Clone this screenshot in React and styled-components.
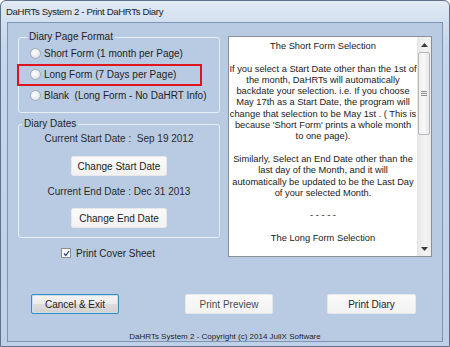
import React from 'react';
import styled, { createGlobalStyle } from 'styled-components';

const GlobalStyle = createGlobalStyle`
    html, body {
        margin: 0;
        padding: 0;
        background: #ffffff;
    }
    body {
        font-family: "Liberation Sans", Arial, sans-serif;
        color: #1e1e1e;
    }
`;

const Window = styled.div`
    width: 450px;
    height: 347px;
    box-sizing: border-box;
    display: flex;
    flex-direction: column;
    border: 1px solid #5f7088;
    border-radius: 6px 6px 0 0;
    background: linear-gradient(180deg, #e3ebf5 0%, #d4e1f0 18px, #c6d7eb 45px, #bdd0e7 100%);
    overflow: hidden;
`;

const TitleBar = styled.div`
    height: 21px;
    display: flex;
    align-items: center;
    padding-left: 5px;
    font-size: 9.6px;
    letter-spacing: -0.35px;
    color: #1b1b1b;
`;

const Client = styled.div`
    flex: 1;
    margin: 0 6px 4px 6px;
    border: 1px solid #7f94ae;
    background: #b8cbe3;
    padding: 8px 10px 0 10px;
    display: flex;
    flex-direction: column;
`;

const TopRow = styled.div`
    display: flex;
    gap: 8px;
    align-items: flex-start;
`;

const LeftCol = styled.div`
    width: 202px;
    display: flex;
    flex-direction: column;
`;

const Group = styled.fieldset`
    margin: ${p => p.$gap || 0}px 0 0 0;
    padding: 0 0 ${p => p.$bottom || 0}px 0;
    border: 1px solid #e8eef6;
    border-radius: 3px;
    min-inline-size: 0;
`;

const Legend = styled.legend`
    margin-left: ${p => p.$offset}px;
    padding: 0 2px;
    font-size: 10px;
    line-height: 12px;
    color: #222;
`;

const RadioRow = styled.label`
    position: relative;
    display: flex;
    align-items: center;
    height: 21px;
    padding-left: 11px;
    font-size: 10px;
    color: #1e1e1e;

    &::after {
        content: '';
        display: ${p => (p.$marked ? 'block' : 'none')};
        position: absolute;
        left: -2px;
        top: 0;
        width: 185px;
        height: 22px;
        box-sizing: border-box;
        border: 2px solid #e0141e;
    }
`;

const RadioDot = styled.span`
    width: 11px;
    height: 11px;
    box-sizing: border-box;
    border-radius: 50%;
    border: 1px solid #a3acb7;
    background: radial-gradient(circle at 40% 35%, #ffffff 0%, #eef1f4 45%, #cdd3da 100%);
    margin-right: 3px;
    flex-shrink: 0;
`;

const DateLine = styled.div`
    margin-top: ${p => p.$gap}px;
    height: 14px;
    line-height: 14px;
    text-align: center;
    font-size: 10px;
    color: #2a2a2a;
    white-space: pre;
`;

const Button = styled.button`
    display: block;
    width: ${p => p.$width || 88}px;
    height: 20px;
    padding: 0;
    margin: ${p => p.$margin || '0'};
    font-family: "Liberation Sans", Arial, sans-serif;
    font-size: 10px;
    color: ${p => (p.$dim ? '#4a4a4a' : '#222')};
    border-radius: 2px;
    border: 1px solid ${p => (p.$focused ? '#3f8ab6' : '#e6e8ea')};
    background: ${p =>
        p.$focused
            ? 'linear-gradient(180deg, #f4f4f4 0%, #ececec 48%, #dedcdc 52%, #d2d0d0 100%)'
            : 'linear-gradient(180deg, #fafafa 0%, #f2f2f2 100%)'};
    box-shadow: ${p => (p.$focused ? 'inset 0 0 0 1px #c2e2f3' : 'none')};
`;

const CheckRow = styled.label`
    display: flex;
    align-items: center;
    justify-content: center;
    margin-top: 9px;
    height: 12px;
    font-size: 10px;
    color: #1e1e1e;
    padding-right: 22px;
`;

const CheckBox = styled.span`
    width: 10px;
    height: 10px;
    box-sizing: border-box;
    border: 1px solid #8e8f8f;
    background: linear-gradient(180deg, #f4f4f4, #ffffff);
    margin-right: 5px;
    display: flex;
    align-items: center;
    justify-content: center;
`;

const InfoPanel = styled.div`
    margin-top: 5px;
    width: 204px;
    height: 221px;
    box-sizing: border-box;
    border: 1px solid #8a9099;
    background: #ffffff;
    display: flex;
`;

const InfoText = styled.div`
    flex: 1;
    padding-top: 4px;
    text-align: center;
    font-size: 9.3px;
    line-height: 11.3px;
    color: #1a1a1a;
    white-space: nowrap;
    overflow: hidden;
`;

const Line = styled.div`
    height: 11.3px;
`;

const ScrollBar = styled.div`
    width: 14px;
    display: flex;
    flex-direction: column;
    background: linear-gradient(90deg, #e6e6e6 0%, #f3f3f3 60%, #ececec 100%);
`;

const ScrollArrow = styled.div`
    height: 15px;
    display: flex;
    align-items: center;
    justify-content: center;
`;

const Track = styled.div`
    flex: 1;
    padding: 0 1px;
`;

const Thumb = styled.div`
    height: 83px;
    box-sizing: border-box;
    border: 1px solid #b5b8bc;
    border-radius: 2px;
    background: linear-gradient(90deg, #f0f0f0 0%, #f8f8f8 50%, #e8e8e8 100%);
    display: flex;
    align-items: center;
    justify-content: center;
`;

const ButtonRow = styled.div`
    margin-top: 35px;
    display: flex;
    justify-content: space-between;
    padding: 0 16px 0 13px;
`;

const Footer = styled.div`
    margin-top: 18px;
    height: 9px;
    line-height: 9px;
    text-align: center;
    font-size: 8px;
    color: #1e1e1e;
`;

const infoLines = [
    'The Short Form Selection',
    '',
    'If you select a Start Date other than the 1st of',
    'the month, DaHRTs will automatically',
    'backdate your selection. i.e. If you choose',
    'May 17th as a Start Date, the program will',
    'change that selection to be May 1st . ( This is',
    "because 'Short Form' prints a whole month",
    'to one page).',
    '',
    'Similarly, Select an End Date other than the',
    'last day of the Month, and it will',
    'automatically be updated to be the Last Day',
    'of your selected Month.',
    '',
    '- - - - -',
    '',
    'The Long Form Selection',
];

const formats = [
    { label: 'Short Form (1 month per Page)' },
    { label: 'Long Form (7 Days per Page)', marked: true },
    { label: 'Blank  (Long Form - No DaHRT Info)' },
];

function Arrow({ down }) {
    return (
        <svg width="7" height="4" viewBox="0 0 7 4">
            <path d={down ? 'M0 0 H7 L3.5 4 Z' : 'M0 4 H7 L3.5 0 Z'} fill="#3a3a3a" />
        </svg>
    );
}

export default function App() {
    return (
        <>
            <GlobalStyle />
            <Window>
                <TitleBar>DaHRTs System 2 - Print DaHRTs Diary</TitleBar>
                <Client>
                    <TopRow>
                        <LeftCol>
                            <Group $bottom={6}>
                                <Legend $offset={8}>Diary Page Format</Legend>
                                {formats.map(f => (
                                    <RadioRow key={f.label} $marked={f.marked}>
                                        <RadioDot />
                                        <span style={{ whiteSpace: 'pre' }}>{f.label}</span>
                                    </RadioRow>
                                ))}
                            </Group>
                            <Group $gap={5} $bottom={9}>
                                <Legend $offset={3}>Diary Dates</Legend>
                                <DateLine $gap={2}>Current Start Date :  Sep 19 2012</DateLine>
                                <Button $width={96} $margin="10px auto 0">Change Start Date</Button>
                                <DateLine $gap={9}>Current End Date : Dec 31 2013</DateLine>
                                <Button $width={96} $margin="9px auto 0">Change End Date</Button>
                            </Group>
                            <CheckRow>
                                <CheckBox>
                                    <svg width="7" height="7" viewBox="0 0 7 7">
                                        <path d="M1 3.5 L2.8 5.5 L6 1" fill="none" stroke="#2b3f66" strokeWidth="1.2" />
                                    </svg>
                                </CheckBox>
                                Print Cover Sheet
                            </CheckRow>
                        </LeftCol>
                        <InfoPanel>
                            <InfoText>
                                {infoLines.map((line, i) => (
                                    <Line key={i}>{line}</Line>
                                ))}
                            </InfoText>
                            <ScrollBar>
                                <ScrollArrow><Arrow /></ScrollArrow>
                                <Track>
                                    <Thumb>
                                        <svg width="6" height="5" viewBox="0 0 6 5">
                                            <path d="M0 0.5 H6 M0 2.5 H6 M0 4.5 H6" stroke="#8a8a8a" strokeWidth="1" />
                                        </svg>
                                    </Thumb>
                                </Track>
                                <ScrollArrow><Arrow down /></ScrollArrow>
                            </ScrollBar>
                        </InfoPanel>
                    </TopRow>
                    <ButtonRow>
                        <Button $focused>Cancel &amp; Exit</Button>
                        <Button $dim $margin="0 0 0 12px">Print Preview</Button>
                        <Button $width={89}>Print Diary</Button>
                    </ButtonRow>
                    <Footer>DaHRTs System 2 - Copyright (c) 2014 JuliX Software</Footer>
                </Client>
            </Window>
        </>
    );
}
